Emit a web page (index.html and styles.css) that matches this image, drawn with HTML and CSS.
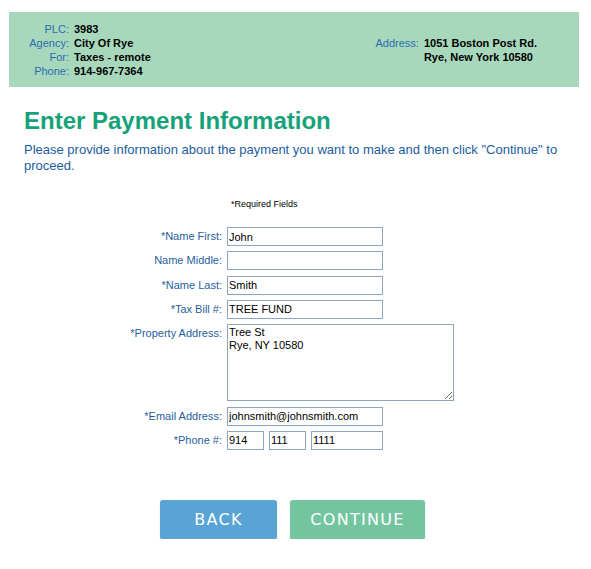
FILE: index.html
```html
<!DOCTYPE html>
<html lang="en">
<head>
<meta charset="utf-8">
<title>Enter Payment Information</title>
<link rel="stylesheet" href="styles.css">
</head>
<body>
<header class="agency">
  <dl class="info">
    <dt>PLC:</dt><dd>3983</dd>
    <dt>Agency:</dt><dd>City Of Rye</dd>
    <dt>For:</dt><dd>Taxes - remote</dd>
    <dt>Phone:</dt><dd>914-967-7364</dd>
  </dl>
  <dl class="info info-address">
    <dt>Address:</dt><dd>1051 Boston Post Rd.<br>Rye, New York 10580</dd>
  </dl>
</header>
<main class="content">
  <h1 class="title">Enter Payment Information</h1>
  <p class="intro">Please provide information about the payment you want to make and then click "Continue" to proceed.</p>
  <p class="required">*Required Fields</p>
  <form class="form">
    <label class="label" for="fn">*Name First:</label>
    <div class="field"><input class="input" id="fn" type="text" value="John"></div>
    <label class="label" for="mn">Name Middle:</label>
    <div class="field"><input class="input" id="mn" type="text" value=""></div>
    <label class="label" for="ln">*Name Last:</label>
    <div class="field"><input class="input" id="ln" type="text" value="Smith"></div>
    <label class="label" for="tb">*Tax Bill #:</label>
    <div class="field"><input class="input" id="tb" type="text" value="TREE FUND"></div>
    <label class="label" for="pa">*Property Address:</label>
    <div class="field"><textarea class="textarea" id="pa">Tree St
Rye, NY 10580</textarea></div>
    <label class="label" for="em">*Email Address:</label>
    <div class="field"><input class="input" id="em" type="text" value="johnsmith@johnsmith.com"></div>
    <label class="label" for="p1">*Phone #:</label>
    <div class="field phone">
      <input class="input ph-short" id="p1" type="text" value="914">
      <input class="input ph-short" type="text" value="111">
      <input class="input ph-long" type="text" value="1111">
    </div>
  </form>
  <div class="actions">
    <button class="btn btn-back" type="button">BACK</button>
    <button class="btn btn-continue" type="button">CONTINUE</button>
  </div>
</main>
</body>
</html>
```
FILE: styles.css
```css
html, body {
  margin: 0;
  padding: 0;
  background: #ffffff;
}
body {
  font-family: "Liberation Sans", Arial, sans-serif;
  color: #000;
}
.agency {
  margin: 12px 0 0 9px;
  width: 570px;
  height: 75px;
  background: #a7d8bc;
  display: flex;
  align-items: center;
}
.info {
  margin: 0;
  display: grid;
  grid-template-columns: 60px auto;
  column-gap: 5px;
  font-size: 11px;
  line-height: 14px;
}
.info dt {
  text-align: right;
  color: #2b6cb0;
}
.info dd {
  margin: 0;
  font-weight: bold;
}
.info-address {
  margin-left: auto;
  padding-right: 42px;
  grid-template-columns: auto auto;
}
.content {
  padding: 0 24px;
}
.title {
  margin: 20px 0 0;
  font-size: 24px;
  line-height: 28px;
  font-weight: bold;
  color: #16a279;
}
.intro {
  margin: 7px 0 0;
  font-size: 13px;
  line-height: 16px;
  color: #1b5d9e;
}
.required {
  margin: 24px 0 0;
  padding-left: 207px;
  font-size: 9px;
  line-height: 12px;
}
.form {
  margin: 17px 0 0;
  display: grid;
  grid-template-columns: 198px auto;
  column-gap: 5px;
  row-gap: 5.33px;
  align-items: start;
}
.label {
  text-align: right;
  font-size: 11px;
  line-height: 19px;
  color: #1f5e9e;
}
.field {
  display: flex;
}
.phone {
  gap: 5px;
}
.input {
  box-sizing: border-box;
  width: 156px;
  height: 19px;
  margin: 0;
  padding: 0 1px;
  border: 1px solid #8aa6c2;
  border-radius: 0;
  font-family: "Liberation Sans", Arial, sans-serif;
  font-size: 11px;
  color: #000;
  background: #fff;
  outline: none;
}
.ph-short {
  width: 37px;
}
.ph-long {
  width: 72px;
}
.textarea {
  box-sizing: border-box;
  width: 227px;
  height: 77px;
  margin: 0;
  padding: 1px;
  border: 1px solid #8aa6c2;
  border-radius: 0;
  font-family: "Liberation Sans", Arial, sans-serif;
  font-size: 11px;
  line-height: 13px;
  color: #000;
  background: #fff;
  resize: both;
  outline: none;
}
.actions {
  margin: 50px 0 0 136px;
  display: flex;
  gap: 13px;
}
.btn {
  height: 39px;
  padding: 0;
  border: none;
  border-radius: 3px;
  font-family: "DejaVu Sans", Verdana, sans-serif;
  font-size: 16px;
  letter-spacing: 1.3px;
  color: #ffffff;
  box-shadow: 0 1px 1px rgba(0, 0, 0, 0.35);
  cursor: pointer;
}
.btn-back {
  width: 117px;
  background: #59a4d4;
}
.btn-continue {
  width: 135px;
  background: #73c59f;
}
```
